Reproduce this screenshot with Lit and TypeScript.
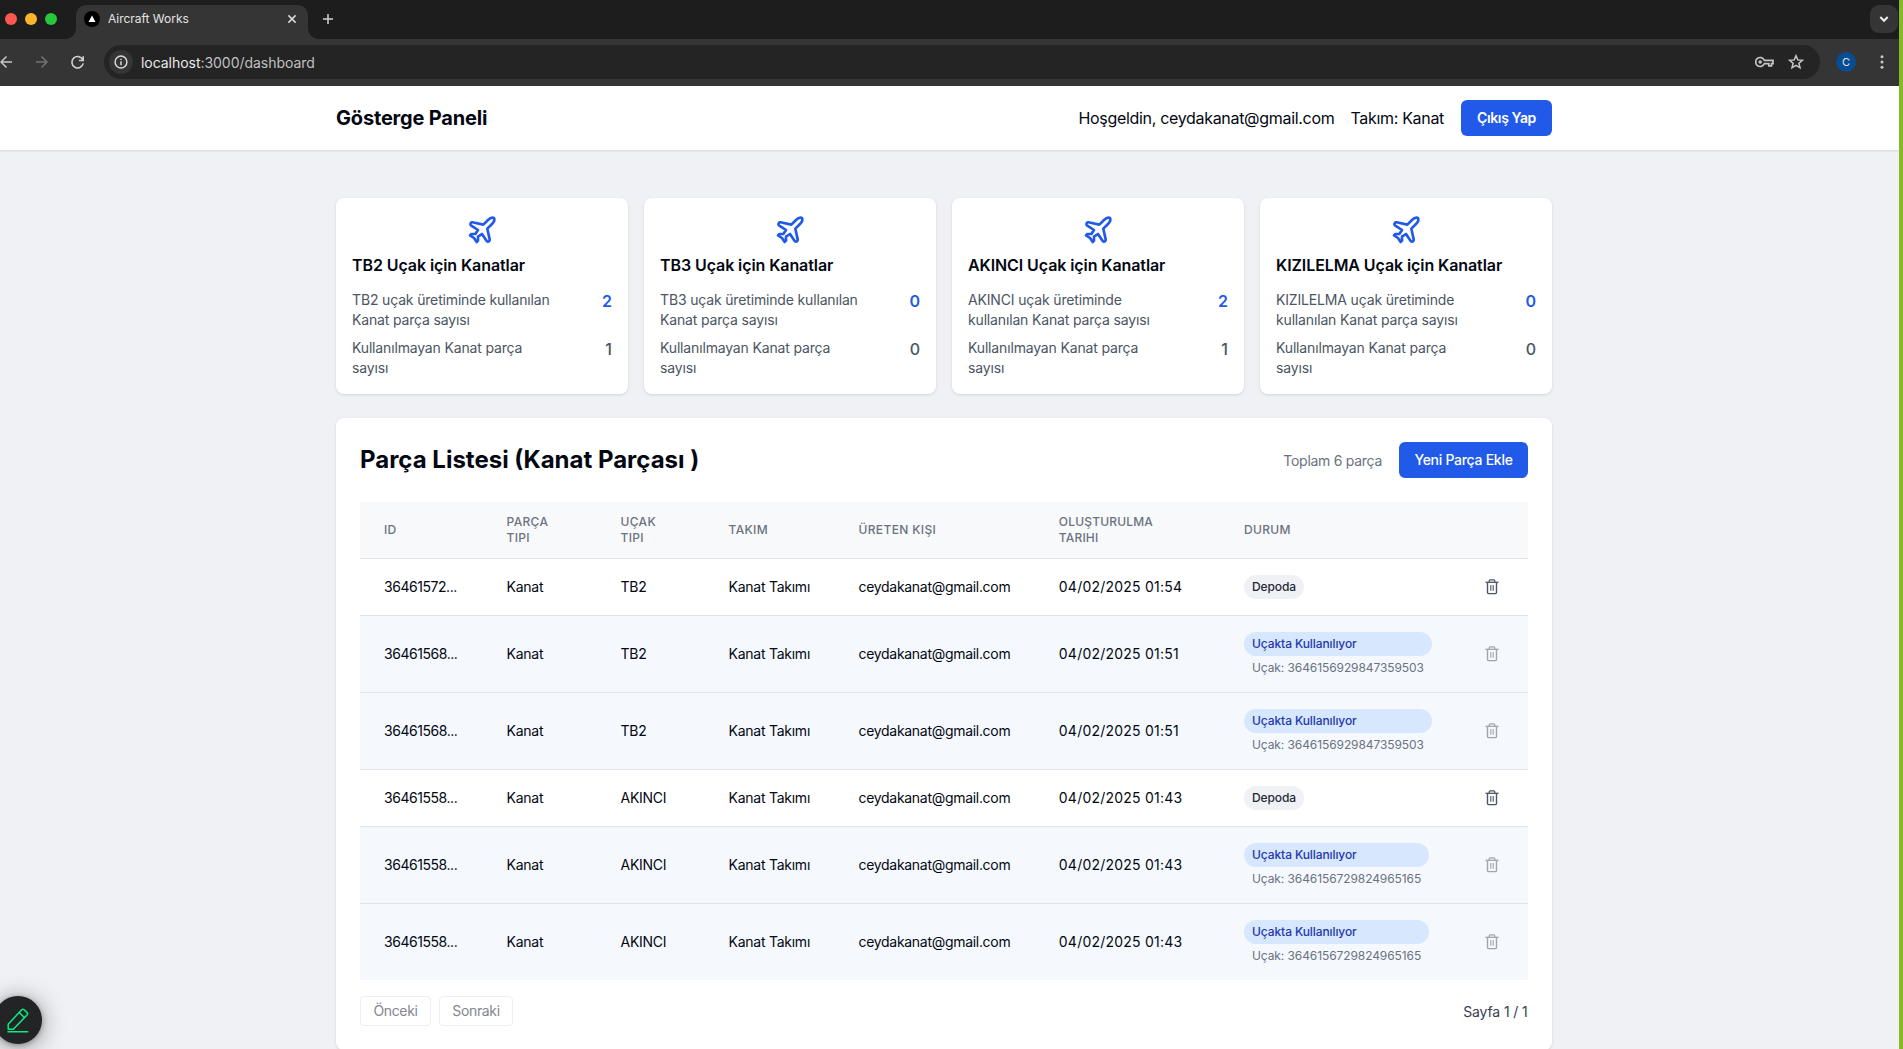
import { LitElement, html, css, svg } from "lit";
import { customElement, property } from "lit/decorators.js";
import { classMap } from "lit/directives/class-map.js";

interface Stat {
  plane: string;
  used: number;
  unused: number;
}

interface Part {
  id: string;
  plane: string;
  date: string;
  usedIn?: string;
}

const STATS: Stat[] = [
  { plane: "TB2", used: 2, unused: 1 },
  { plane: "TB3", used: 0, unused: 0 },
  { plane: "AKINCI", used: 2, unused: 1 },
  { plane: "KIZILELMA", used: 0, unused: 0 },
];

const PARTS: Part[] = [
  { id: "36461572...", plane: "TB2", date: "04/02/2025 01:54" },
  { id: "36461568...", plane: "TB2", date: "04/02/2025 01:51", usedIn: "3646156929847359503" },
  { id: "36461568...", plane: "TB2", date: "04/02/2025 01:51", usedIn: "3646156929847359503" },
  { id: "36461558...", plane: "AKINCI", date: "04/02/2025 01:43" },
  { id: "36461558...", plane: "AKINCI", date: "04/02/2025 01:43", usedIn: "3646156729824965165" },
  { id: "36461558...", plane: "AKINCI", date: "04/02/2025 01:43", usedIn: "3646156729824965165" },
];

const trashIcon = html`<svg class="trash" width="16" height="16" viewBox="0 0 16 16" fill="none" stroke="currentColor">
  ${svg`<path d="M1.500 3.300h13" stroke-width="1.3"/>
  <path d="M5.200 3.200V1.700q0-.9.900-.9h3.800q.9 0 .9.900v1.500" stroke-width="1.200"/>
  <path d="M3.500 3.600v9.900q0 1.100 1.100 1.100h6.800q1.100 0 1.100-1.100V3.600" stroke-width="1.400"/>
  <path d="M6.800 6v5.800M9.200 6v5.800" stroke-width="1.100"/>`}
</svg>`;

@customElement("browser-bar")
export class BrowserBar extends LitElement {
  static styles = css`
    :host { display: block; height: 86px; background: #353535; color: #e3e3e3; }
    .strip { display: flex; align-items: flex-start; height: 39px; background: #1d1d1d; }
    .lights { display: flex; gap: 8px; padding: 13px 19px 0 5px; }
    .light { width: 12px; height: 12px; border-radius: 50%; }
    .red { background: #ff5650; }
    .amber { background: #ffb529; }
    .green { background: #28c63a; }
    .tab {
      position: relative; box-sizing: border-box; display: flex; align-items: center;
      width: 232px; height: 34px; margin-top: 5px; padding: 0 10px 6px 8px;
      background: #353535; border-radius: 10px 10px 0 0;
      font-size: 12px; font-weight: 400; letter-spacing: -0.02px;
    }
    .tab::before, .tab::after {
      content: ""; position: absolute; bottom: 0; width: 10px; height: 10px;
    }
    .tab::before { left: -10px; background: radial-gradient(circle at 0 0, transparent 9.5px, #353535 10px); }
    .tab::after { right: -10px; background: radial-gradient(circle at 100% 0, transparent 9.5px, #353535 10px); }
    .tab-title { flex: 1; margin-left: 8px; padding-bottom: 1px; }
    svg { display: block; flex: none; }
    .plus { margin: 13px 0 0 14px; }
    .spacer { flex: 1; }
    .chevron {
      display: grid; place-items: center; width: 28px; height: 28px; margin: 5px 1px 0 0;
      background: #353535; border-radius: 9px;
    }
    .tools { display: flex; align-items: center; height: 46px; }
    .reload { margin: 0 19px 0 22px; }
    .omni {
      flex: 1; box-sizing: border-box; display: flex; align-items: center; height: 34px;
      padding: 0 16px 0 5px; border-radius: 17px; background: #242424;
    }
    .info { display: grid; place-items: center; width: 24px; height: 24px; border-radius: 50%; background: #353535; }
    .url { flex: 1; margin-left: 8px; font-size: 14px; letter-spacing: -0.04px; color: #c0c0c0; }
    .host { color: #e8e8e8; }
    .key { margin-right: 14px; }
    .avatar {
      display: grid; place-items: center; width: 20px; height: 20px; margin: 0 24px 0 16px;
      border-radius: 50%; background: #084d92; font-size: 11px;
    }
    .dots { margin-right: 15px; }
  `;

  render() {
    return html`
      <div class="strip">
        <div class="lights">
          <span class="light red"></span><span class="light amber"></span><span class="light green"></span>
        </div>
        <div class="tab">
          <svg width="16" height="16" viewBox="0 0 16 16"><circle cx="8" cy="8" r="8" fill="#000"/><path d="M8 4.6 11.5 11h-7z" fill="#fff"/></svg>
          <span class="tab-title">Aircraft Works</span>
          <svg width="12" height="12" viewBox="0 0 12 12" stroke="#d8d8d8" stroke-width="1.5"><path d="m2.4 2.4 7.2 7.2m0-7.2L2.4 9.6"/></svg>
        </div>
        <svg class="plus" width="12" height="12" viewBox="0 0 12 12" stroke="#d0d0d0" stroke-width="1.5"><path d="M1 6h10M6 1v10"/></svg>
        <span class="spacer"></span>
        <span class="chevron"><svg width="12" height="12" viewBox="0 0 12 12" fill="none" stroke="#eee" stroke-width="2"><path d="m2.3 4 3.7 3.8L9.7 4"/></svg></span>
      </div>
      <div class="tools">
        <svg width="48" height="14" viewBox="0 0 48 14" fill="none" stroke-width="1.5">
          <path d="M12 7H1M6.5 1.5 1 7l5.5 5.5" stroke="#c8c8c8"/>
          <path d="M36 7h11M41.5 1.5 47 7l-5.5 5.5" stroke="#747474"/>
        </svg>
        <svg class="reload" width="15" height="15" viewBox="0 0 15 15" fill="none" stroke="#cfcfcf" stroke-width="1.6"><path d="M12.7 4.7A5.7 5.7 0 1 0 13.2 8.4M13.2 1.2v4.3H8.9"/></svg>
        <div class="omni">
          <span class="info"><svg width="14" height="14" viewBox="0 0 14 14" fill="none" stroke="#d8d8d8" stroke-width="1.5"><circle cx="7" cy="7" r="5.9"/><path d="M7 6.3v4M7 3.7v1.4"/></svg></span>
          <span class="url"><span class="host">localhost</span>:3000/dashboard</span>
          <svg class="key" width="19" height="12" viewBox="0 0 19 12" fill="none" stroke="#c4c4c4" stroke-width="1.7"><path d="M9.3 4.3A4.5 4.5 0 1 0 9.3 7.7h4.5v2.1h2.7V7.7h1.5V4.3z"/><circle cx="5.2" cy="6" r="1.8" fill="#c4c4c4" stroke="none"/></svg>
          <svg width="16" height="16" viewBox="0 0 16 16" fill="none" stroke="#c8c8c8" stroke-width="1.5"><path d="m8 1.7 1.8 4.2 4.6.4-3.5 3 1.1 4.5L8 11.4l-4 2.4 1.100-4.500-3.500-3 4.600-.4z"/></svg>
        </div>
        <span class="avatar">C</span>
        <svg class="dots" width="4" height="14" viewBox="0 0 4 14" fill="#c8c8c8"><circle cx="2" cy="1.8" r="1.5"/><circle cx="2" cy="7" r="1.5"/><circle cx="2" cy="12.2" r="1.5"/></svg>
      </div>
    `;
  }
}

@customElement("stat-card")
export class StatCard extends LitElement {
  @property({ attribute: false }) stat!: Stat;

  static styles = css`
    :host {
      display: block; box-sizing: border-box; height: 196px; padding: 16px;
      background: #fff; border-radius: 8px; box-shadow: 0 1px 3px rgba(0, 0, 0, 0.13);
    }
    .plane { display: block; margin: 0 auto 7px; color: #2159e8; }
    h3 { margin: 0 0 13px; font-size: 16px; line-height: 24px; font-weight: 600; letter-spacing: -0.09px; }
    .line { display: flex; justify-content: space-between; align-items: flex-start; height: 40px; margin-bottom: 8px; }
    .label { width: 200px; font-size: 14px; line-height: 20px; letter-spacing: -0.16px; color: #4b5563; }
    .label.narrow { width: 184px; }
    .num { font-size: 16px; line-height: 22px; font-weight: 500; color: #4b5563; }
    .num.used { font-weight: 600; color: #2159e8; }
  `;

  render() {
    const { plane, used, unused } = this.stat;
    return html`
      <svg class="plane" width="32" height="32" viewBox="0 0 24 24" fill="none" stroke="currentColor" stroke-width="2" stroke-linecap="round" stroke-linejoin="round">
        <path d="M17.8 19.2 16 11l3.5-3.5C21 6 21.5 4 21 3c-1-.5-3 0-4.5 1.5L13 8 4.8 6.2c-.5-.1-.9.1-1.1.5l-.3.5c-.2.5-.1 1 .3 1.3L9 12l-2 3H4l-1 1 3 2 2 3 1-1v-3l3-2 3.5 5.3c.3.4.8.5 1.3.3l.5-.2c.4-.3.6-.7.5-1.2z"/>
      </svg>
      <h3>${`${plane} Uçak için Kanatlar`}</h3>
      <div class="line">
        <span class="label">${`${plane} uçak üretiminde kullanılan Kanat parça sayısı`}</span>
        <span class="num used">${used}</span>
      </div>
      <div class="line">
        <span class="label narrow">Kullanılmayan Kanat parça sayısı</span>
        <span class="num">${unused}</span>
      </div>
    `;
  }
}

@customElement("part-table")
export class PartTable extends LitElement {
  static styles = css`
    :host { display: block; font-size: 14px; }
    .row {
      display: grid; grid-template-columns: 122.5px 114px 108px 130px 200.3px 185.2px 236px 72px;
      align-items: center; box-sizing: border-box; height: 57px; border-bottom: 1px solid #dfe2e8;
      letter-spacing: -0.25px;
    }
    .row > span { padding: 0 0 1px 24px; white-space: nowrap; }
    .row.head > span { padding-bottom: 0; }
    .head { background: #f8f9fb; color: #6b7280; font-size: 12px; line-height: 16px; font-weight: 500; letter-spacing: 0.35px; }
    .row > .wide { letter-spacing: 0.18px; }
    .row > .id { letter-spacing: -0.45px; }
    .row > .date { letter-spacing: 0.23px; }
    .row > .mail { letter-spacing: -0.3px; }
    .row.used { height: 77px; background: #f5f9fe; }
    .row:last-child { height: 76px; border-bottom: 0; }
    .row > .status { display: flex; flex-direction: column; align-items: flex-start; padding-bottom: 0; font-size: 12px; }
    .stack { display: flex; flex-direction: column; }
    .badge {
      padding: 0 8px; border-radius: 12px; line-height: 24px; font-weight: 500;
      letter-spacing: -0.1px; background: #f0f1f5; color: #1f2937;
    }
    .used .badge { background: #d7e7fe; color: #1e38ad; letter-spacing: -0.09px; }
    .note { height: 20px; padding: 0 8px; line-height: 24px; letter-spacing: -0.09px; color: #6b7280; }
    .row > .action { padding: 0; display: grid; place-items: center; color: #4b5563; }
    .used > .action { opacity: 0.5; }
    .trash { display: block; }
  `;

  render() {
    return html`
      <div class="row head">
        <span>ID</span><span>PARÇA<br />TIPI</span><span>UÇAK<br />TIPI</span><span>TAKIM</span>
        <span>ÜRETEN KIŞI</span><span class="wide">OLUŞTURULMA<br />TARIHI</span><span>DURUM</span><span></span>
      </div>
      ${PARTS.map(
        (p) => html`
          <div class=${classMap({ row: true, used: !!p.usedIn })}>
            <span class="id">${p.id}</span>
            <span>Kanat</span>
            <span>${p.plane}</span>
            <span>Kanat Takımı</span>
            <span class="mail">ceydakanat@gmail.com</span>
            <span class="date">${p.date}</span>
            <span class="status">
              ${p.usedIn
                ? html`<div class="stack"><div class="badge">Uçakta Kullanılıyor</div><div class="note">${`Uçak: ${p.usedIn}`}</div></div>`
                : html`<div class="badge">Depoda</div>`}
            </span>
            <span class="action">${trashIcon}</span>
          </div>
        `
      )}
    `;
  }
}

@customElement("app-root")
export class AppRoot extends LitElement {
  static styles = css`
    :host {
      display: flex; position: relative; height: 1049px; overflow: hidden; background: #f0f1f5;
      font-family: Inter, "Liberation Sans", sans-serif; color: #030712;
    }
    .window { flex: 1; min-width: 0; }
    .edge { width: 4px; background: #85b927; }
    .bar { height: 64px; background: #fff; box-shadow: 0 1px 2px rgba(0, 0, 0, 0.12); }
    .wrap { padding-right: 11px; }
    .inner { width: 1216px; margin: 0 auto; }
    .nav { display: flex; align-items: center; gap: 16px; height: 64px; }
    h1 { flex: 1; margin: 0; font-size: 20px; font-weight: 700; letter-spacing: -0.18px; }
    .who { padding-bottom: 1px; font-size: 16px; letter-spacing: -0.31px; }
    .team { margin-right: 1px; }
    .btn {
      box-sizing: border-box; height: 36px; border-radius: 6px; background: #2159e8; color: #fff;
      font-size: 14px; font-weight: 500; line-height: 36px; text-align: center; letter-spacing: -0.28px;
    }
    .logout { width: 91px; font-weight: 600; letter-spacing: -0.38px; }
    .add { width: 129px; }
    .cards { display: grid; grid-template-columns: repeat(4, 1fr); gap: 16px; padding-top: 48px; }
    .panel {
      box-sizing: border-box; margin-top: 24px; padding: 24px; background: #fff; border-radius: 8px;
      box-shadow: 0 1px 3px rgba(0, 0, 0, 0.13);
    }
    .panel-head { display: flex; align-items: center; gap: 16px; height: 36px; margin-bottom: 24px; }
    h2 { flex: 1; margin: 0; font-size: 24px; font-weight: 700; line-height: 32px; }
    .total { margin-right: 1px; font-size: 14px; letter-spacing: -0.28px; color: #6b7280; }
    .pager { display: flex; align-items: center; gap: 8px; margin-top: 16px; font-size: 14px; }
    .page-btn {
      box-sizing: border-box; width: 71px; height: 30px; border: 1px solid #eceef3; border-radius: 4px;
      line-height: 28px; text-align: center; letter-spacing: -0.34px; color: #83868d;
    }
    .next { width: 74px; }
    .page { flex: 1; padding-right: 0.5px; text-align: right; letter-spacing: -0.14px; color: #374151; }
    .fab {
      position: absolute; left: -6px; top: 995.5px; width: 48px; height: 48px; border-radius: 50%;
      background: #222426; box-shadow: 0 3px 24px rgba(0, 0, 0, 0.42), 0 1px 5px rgba(0, 0, 0, 0.3);
    }
  `;

  render() {
    return html`
      <div class="window">
        <browser-bar></browser-bar>
        <div class="bar wrap">
          <div class="inner nav">
            <h1>Gösterge Paneli</h1>
            <span class="who">Hoşgeldin, ceydakanat@gmail.com</span>
            <span class="who team">Takım: Kanat</span>
            <div class="btn logout">Çıkış Yap</div>
          </div>
        </div>
        <div class="wrap">
          <div class="inner">
            <div class="cards">${STATS.map((s) => html`<stat-card .stat=${s}></stat-card>`)}</div>
            <div class="panel">
              <div class="panel-head">
                <h2>Parça Listesi (Kanat Parçası )</h2>
                <span class="total">Toplam 6 parça</span>
                <div class="btn add">Yeni Parça Ekle</div>
              </div>
              <part-table></part-table>
              <div class="pager">
                <div class="page-btn">Önceki</div>
                <div class="page-btn next">Sonraki</div>
                <span class="page">Sayfa 1 / 1</span>
              </div>
            </div>
          </div>
        </div>
      </div>
      <div class="edge"></div>
      <div class="fab">
        <svg width="48" height="48" viewBox="0 0 48 48" fill="none" stroke="#08ed83" stroke-width="1.5" stroke-linejoin="round" stroke-linecap="round">
          <path d="M14.2 28.2 27.7 13.8q1.2-1.2 2.5 0l2.8 2.8q1.2 1.2 0 2.5L19.3 33.2h-5.1zM25.3 16.5l5.2 5.2M14 35.7h19.7"/>
        </svg>
      </div>
    `;
  }
}
